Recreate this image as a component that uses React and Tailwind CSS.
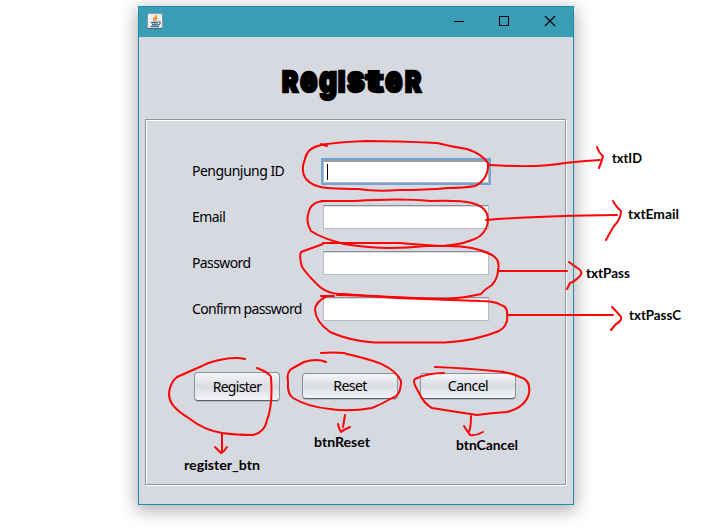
const Field = ({ label, tracking, focused }) => (
  <div className="flex h-[46px] items-center">
    <label className={`w-[131px] whitespace-nowrap text-[14px] leading-[20px] ${tracking}`}>{label}</label>
    {focused ? (
      <div className="-ml-[2px] flex h-[27px] w-[170px] items-center border-2 border-[#73a4d1] bg-white">
        <div className="flex h-full w-full items-center border border-t-2 border-[#b8bac0] border-t-[#9a9ca2]">
          <span className="ml-[3px] h-[16px] w-px bg-black" />
        </div>
      </div>
    ) : (
      <div className="-mt-px h-[24px] w-[166px] border border-[#b8bac0] border-t-[#8d8e93] bg-white shadow-[inset_0_1px_0_#dcdcde]" />
    )}
  </div>
);

const Button = ({ children, className }) => (
  <button className={`flex items-center justify-center rounded-[4px] border border-[#8b9099] border-b-[#5b6168] bg-linear-to-b from-[#f5f6f8] via-[#d9dce2] to-[#f4f5f8] text-[14px] leading-none shadow-[0_1px_0_#b5b9c1] ${className}`}>
    {children}
  </button>
);

const strokes = [
  "M321 144 L327 146 M327 144 L321 145 Q307 148 305 159 Q300 171 306 179 Q313 187 327 188 Q345 189 358 189 Q377 192 399 190 Q425 190 448 188 Q464 188 475 186 Q489 179 488 163 Q482 154 467 149 Q453 147 437 143 Q395 141 366 141 Q338 142 321 145",
  "M489 165 Q540 168 565 163 Q582 161 600 160 M597 147 Q599 153 603 156 Q602 161 599 168",
  "M321 201 H355 Q400 198 430 201 Q460 200 472 203 Q488 207 488 220 Q487 235 472 240 Q455 247 426 246 Q408 248 390 248 Q369 248 344 244 Q321 238 311 231 Q305 221 309 211 Q312 200 329 201",
  "M486 220 Q535 216 617 215 M613 201 Q617 208 621 211 Q621 219 614 226 Q612 229 606 240",
  "M323 243 H400 Q424 245 442 246 Q473 245 490 254 Q501 259 498 270 Q498 278 492 285 Q485 289 481 294 Q464 298 445 299 Q380 297 344 294 Q330 295 320 287 Q309 277 302 267 Q299 257 301 252 L323 244",
  "M499 271 H567 M569 262 Q574 266 579 269 Q583 272 580 276 Q574 282 570 283 L567 289",
  "M321 296 H334 M327 296 Q315 302 315 310 Q316 322 330 332 Q350 341 374 342.500 H445 Q475 341 499 331 Q509 325 507 314 Q508 307 501 305 Q495 301 480 301 L397 298 Q360 295 337 295",
  "M508 315 H613 M612 307 Q618 313 621 317 Q622 321 616 324 L611 330",
  "M245 359 C232 356 211 361 202 366 L177 377 Q172 381 170 388 C166 401 174 409 190 419 Q204 430 222 433 Q236 435 253 435 Q265 432 267 420 C272 408 272 391 271 377 Q270 373 257 368",
  "M222 433 V452 M215 447 Q218 450 221 453 Q223 453 227 447",
  "M326 362 Q317 358 304 362 L293 368 Q286 371 288 382 Q287 394 293 398 Q308 407 330 409 Q349 412 372 408 Q382 404 392 398 Q401 396 401 381 C392 362 364 359 344 353 Q333 352 321 353",
  "M345 415 L343 427 M338 424 Q339 429 341 432 Q343 430 350 427",
  "M444 373 Q427 373 415 379 Q412 381 418 391 Q424 404 432 408 Q450 411 477 415 Q491 413 507 412 Q526 407 529 393 Q531 380 520 377 Q510 372 494 371 Q463 368 435 367",
  "M471 416 Q471 427 469 432 M464 426 Q467 431 470 435 Q476 436 483 432",
];

const notes = [
  ["txtID", 612, 163, 30], ["txtEmail", 628, 219, 51], ["txtPass", 586, 278, 44], ["txtPassC", 629, 320, 52],
  ["btnReset", 314, 447, 56], ["btnCancel", 456, 450, 62], ["register_btn", 184, 470, 76],
];

const Title = () => (
  <h1 className="ml-[143px] flex h-[35px] items-baseline font-[Inter,sans-serif] font-black text-black [-webkit-text-stroke:2.4px_black]">
    <span className="w-[18px] text-[29px] leading-[35px]"><span className="inline-block origin-left scale-x-[.84]">R</span></span>
    <span className="w-[19px] text-[37px] leading-[35px]"><span className="inline-block origin-left scale-x-[.78]">e</span></span>
    <span className="w-[19px] text-[37px] leading-[35px]"><span className="inline-block origin-left scale-x-[.76]">g</span></span>
    <span className="w-[9px] text-[29px] leading-[35px] uppercase"><span className="inline-block origin-left scale-x-[.86]">i</span></span>
    <span className="w-[19px] text-[37px] leading-[35px]"><span className="inline-block origin-left scale-x-[.82]">s</span></span>
    <span className="w-[19px] text-[30px] leading-[35px]"><span className="inline-block origin-left scale-x-[1.45]">t</span></span>
    <span className="w-[20px] text-[37px] leading-[35px]"><span className="inline-block origin-left scale-x-[.78]">e</span></span>
    <span className="w-[18px] text-[29px] leading-[35px] uppercase"><span className="inline-block origin-left scale-x-[.84]">r</span></span>
  </h1>
);

export default function App() {
  return (
    <div className="relative h-[531px] w-[725px] overflow-hidden bg-white pl-[138px] pt-[6px] font-['Noto_Sans',sans-serif] text-black">
      <main className="flex h-[499px] w-[436px] flex-col border border-[#1b8fa9] bg-[#d6d9e0] shadow-[0_4px_16px_2px_rgba(0,0,0,0.3)]">
        <header className="flex h-[30px] shrink-0 items-center justify-between bg-[#389db5] pl-[8px] pr-[17px]">
          <svg className="-mt-[2px] h-4 w-4" viewBox="0 0 16 16">
            <rect x=".5" y=".5" width="15" height="15" rx="1.5" fill="#edf0f1" stroke="#8a9ba3" />
            <path d="M1 15.5H15" stroke="#4c626c" />
            <path d="M9.5 2Q9.5 4 7.5 5T7.5 8M10.5 4.5Q8 6 9 8" fill="none" stroke="#ef8424" strokeWidth="1.4" />
            <path d="M4 9.5H11M5 11.5H10.5M3.5 13.5H12M11.5 9Q14 8.7 13 10.5T11 11.5" fill="none" stroke="#416d8c" strokeWidth="1.3" />
          </svg>
          <svg className="-mt-[2px] h-[12px] w-[102px]" viewBox="0 0 102 12" fill="none" stroke="black">
            <path d="M0 6.5H10M45.500 1.500H54.500V10.500H45.500Z" shapeRendering="crispEdges" />
            <path d="M91 1L101 11M101 1L91 11" strokeWidth="1.2" />
          </svg>
        </header>
        <div className="pt-[24px]"><Title /></div>
        <section className="ml-[6px] mt-[23px] h-[366px] w-[421px] border border-[#929399] pl-[46px] pt-[28px] shadow-[inset_1px_1px_0_white,1px_1px_0_white]">
          <Field label="Pengunjung ID" tracking="tracking-[-0.52px]" focused />
          <Field label="Email" tracking="tracking-[-0.55px]" />
          <Field label="Password" tracking="tracking-[-0.6px]" />
          <Field label="Confirm password" tracking="tracking-[-0.67px]" />
          <div className="mt-[40px] flex items-start">
            <Button className="ml-[2px] h-[29px] w-[86px] tracking-[-0.7px]">Register</Button>
            <Button className="ml-[22px] mt-px h-[26px] w-[96px] tracking-[-0.55px]">Reset</Button>
            <Button className="ml-[22px] mt-px h-[26px] w-[96px] tracking-[-0.55px]">Cancel</Button>
          </div>
        </section>
      </main>
      <svg className="pointer-events-none absolute inset-0 h-[531px] w-[725px]" viewBox="0 0 725 531">
        <g fill="none" stroke="#fb0507" strokeWidth="2" strokeLinecap="round" strokeLinejoin="round">
          {strokes.map((d) => <path key={d} d={d} />)}
        </g>
        <g className="font-[Lato,sans-serif] text-[14px] font-bold" fill="black">
          {notes.map(([text, x, y, w]) => (
            <text key={text} x={x} y={y} textLength={w} lengthAdjust="spacingAndGlyphs">{text}</text>
          ))}
        </g>
      </svg>
    </div>
  );
}
